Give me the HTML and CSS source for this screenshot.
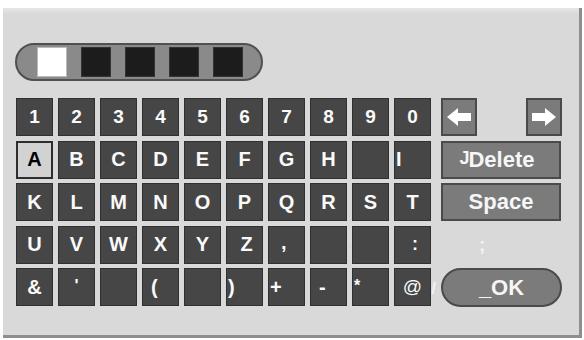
FILE: index.html
```html
<!DOCTYPE html>
<html>
<head>
<meta charset="utf-8">
<link rel="stylesheet" href="styles.css">
</head>
<body>
<div class="panel">
  <div class="pill">
    <span class="sq on"></span><span class="sq"></span><span class="sq"></span><span class="sq"></span><span class="sq"></span>
  </div>
  <div class="board">
    <div class="keys">
      <div class="k num">1</div><div class="k num">2</div><div class="k num">3</div><div class="k num">4</div><div class="k num">5</div>
      <div class="k num">6</div><div class="k num">7</div><div class="k num">8</div><div class="k num">9</div><div class="k num">0</div>

      <div class="k sel">A</div><div class="k">B</div><div class="k">C</div><div class="k">D</div><div class="k">E</div>
      <div class="k">F</div><div class="k">G</div><div class="k">H</div><div class="k"></div><div class="k edge">I</div>

      <div class="k">K</div><div class="k">L</div><div class="k">M</div><div class="k">N</div><div class="k">O</div>
      <div class="k">P</div><div class="k">Q</div><div class="k">R</div><div class="k">S</div><div class="k">T</div>

      <div class="k">U</div><div class="k">V</div><div class="k">W</div><div class="k">X</div><div class="k">Y</div>
      <div class="k zed">Z</div><div class="k low">,</div><div class="k"></div><div class="k edge"><span class="dot">.</span></div><div class="k colon">:</div>

      <div class="k">&amp;</div><div class="k apos">'</div><div class="k"></div><div class="k edge pad">(</div><div class="k"></div>
      <div class="k edge">)</div><div class="k edge">+</div><div class="k edge pad">-</div><div class="k edge top">*</div><div class="k at">@<span class="slash">/</span></div>
    </div>
    <div class="side">
      <div class="arrows">
        <div class="btn arrow">
          <svg width="24" height="18" viewBox="0 0 24 18"><polygon points="0,9 11,0 11,5 24,5 24,13 11,13 11,18" fill="#fff"/></svg>
        </div>
        <div class="btn arrow">
          <svg width="24" height="18" viewBox="0 0 24 18"><polygon points="24,9 13,0 13,5 0,5 0,13 13,13 13,18" fill="#fff"/></svg>
        </div>
      </div>
      <div class="btn wide del"><span class="j">J</span>Delete</div>
      <div class="btn wide">Space</div>
      <div class="semi">;</div>
      <div class="ok">_OK</div>
    </div>
  </div>
</div>
</body>
</html>
```

FILE: styles.css
```css
html, body {
  margin: 0;
  padding: 0;
  background: #ffffff;
}
body {
  width: 584px;
  height: 340px;
  overflow: hidden;
  font-family: "Liberation Sans", Arial, sans-serif;
}
.panel {
  margin: 8px 0 0 3px;
  width: 579px;
  height: 330px;
  box-sizing: border-box;
  background: linear-gradient(#e6e6e6 0px, #d9d9d9 6px, #d9d9d9 100%);
  border-right: 3px solid #8e8e8e;
  border-bottom: 3px solid #8e8e8e;
  padding: 35px 0 0 12px;
}
.pill {
  display: flex;
  align-items: center;
  gap: 14px;
  width: 248px;
  height: 38px;
  box-sizing: border-box;
  padding: 0 18px 0 20px;
  background: #8a8a8a;
  border: 2px solid #505050;
  border-radius: 19px;
}
.sq {
  width: 30px;
  height: 30px;
  background: #1c1c1c;
  box-sizing: border-box;
  border: 1px solid #333;
}
.sq.on {
  background: #ffffff;
  border-color: #bbb;
}
.board {
  display: flex;
  gap: 10px;
  margin-top: 17px;
  margin-left: 1px;
}
.keys {
  display: grid;
  grid-template-columns: repeat(10, 37px);
  grid-template-rows: repeat(5, 38px);
  column-gap: 5px;
  row-gap: 4.5px;
}
.k {
  position: relative;
  display: flex;
  align-items: center;
  justify-content: center;
  background: #464646;
  border: 1px solid #303030;
  box-sizing: border-box;
  color: #fafafa;
  font-weight: bold;
  font-size: 20px;
}
.k.num {
  font-size: 19px;
}
.k.sel {
  background: #d2d2d2;
  border: 2px solid #2e2e2e;
  color: #000;
}
.k.zed {
  padding-left: 4px;
}
.k.edge {
  justify-content: flex-start;
  padding-left: 1px;
}
.k.edge.pad {
  padding-left: 8px;
}
.k.top {
  align-items: flex-start;
  padding-top: 8px;
  font-size: 16px;
}
.k.low {
  align-items: flex-end;
  padding-bottom: 9px;
  justify-content: flex-start;
  padding-left: 12px;
}
.k.colon {
  justify-content: flex-end;
  padding-right: 12px;
  font-size: 18px;
}
.k.apos {
  align-items: flex-start;
  padding-top: 7px;
  font-size: 17px;
}
.k .dot {
  margin-left: -6px;
  margin-top: -4px;
  color: #cfcfcf;
  font-weight: normal;
  font-size: 14px;
}
.k.at {
  font-weight: normal;
  font-size: 19px;
}
.slash {
  position: absolute;
  right: -6px;
  top: 10px;
  font-weight: bold;
  font-size: 17px;
  color: #f2f2f2;
}
.side {
  display: grid;
  grid-template-columns: 121px;
  grid-template-rows: repeat(5, 38px);
  row-gap: 4.5px;
}
.arrows {
  display: flex;
  justify-content: space-between;
}
.btn {
  display: flex;
  align-items: center;
  justify-content: center;
  background: #7b7b7b;
  border: 2px solid #4a4a4a;
  box-sizing: border-box;
  color: #f6f6f6;
  font-weight: bold;
  font-size: 22px;
}
.btn.arrow {
  width: 36px;
  height: 38px;
}
.btn.wide {
  width: 120px;
}
.btn.del {
  padding-right: 8px;
}
.j {
  font-size: 18px;
  margin-top: -3px;
  margin-right: -1px;
}
.semi {
  display: flex;
  align-items: center;
  padding-left: 38px;
  color: #f4f4f4;
  font-weight: bold;
  font-size: 19px;
}
.ok {
  display: flex;
  align-items: center;
  justify-content: center;
  width: 121px;
  height: 39px;
  box-sizing: border-box;
  background: #7b7b7b;
  border: 2px solid #4a4a4a;
  border-radius: 20px;
  color: #f6f6f6;
  font-weight: bold;
  font-size: 22px;
}
```
